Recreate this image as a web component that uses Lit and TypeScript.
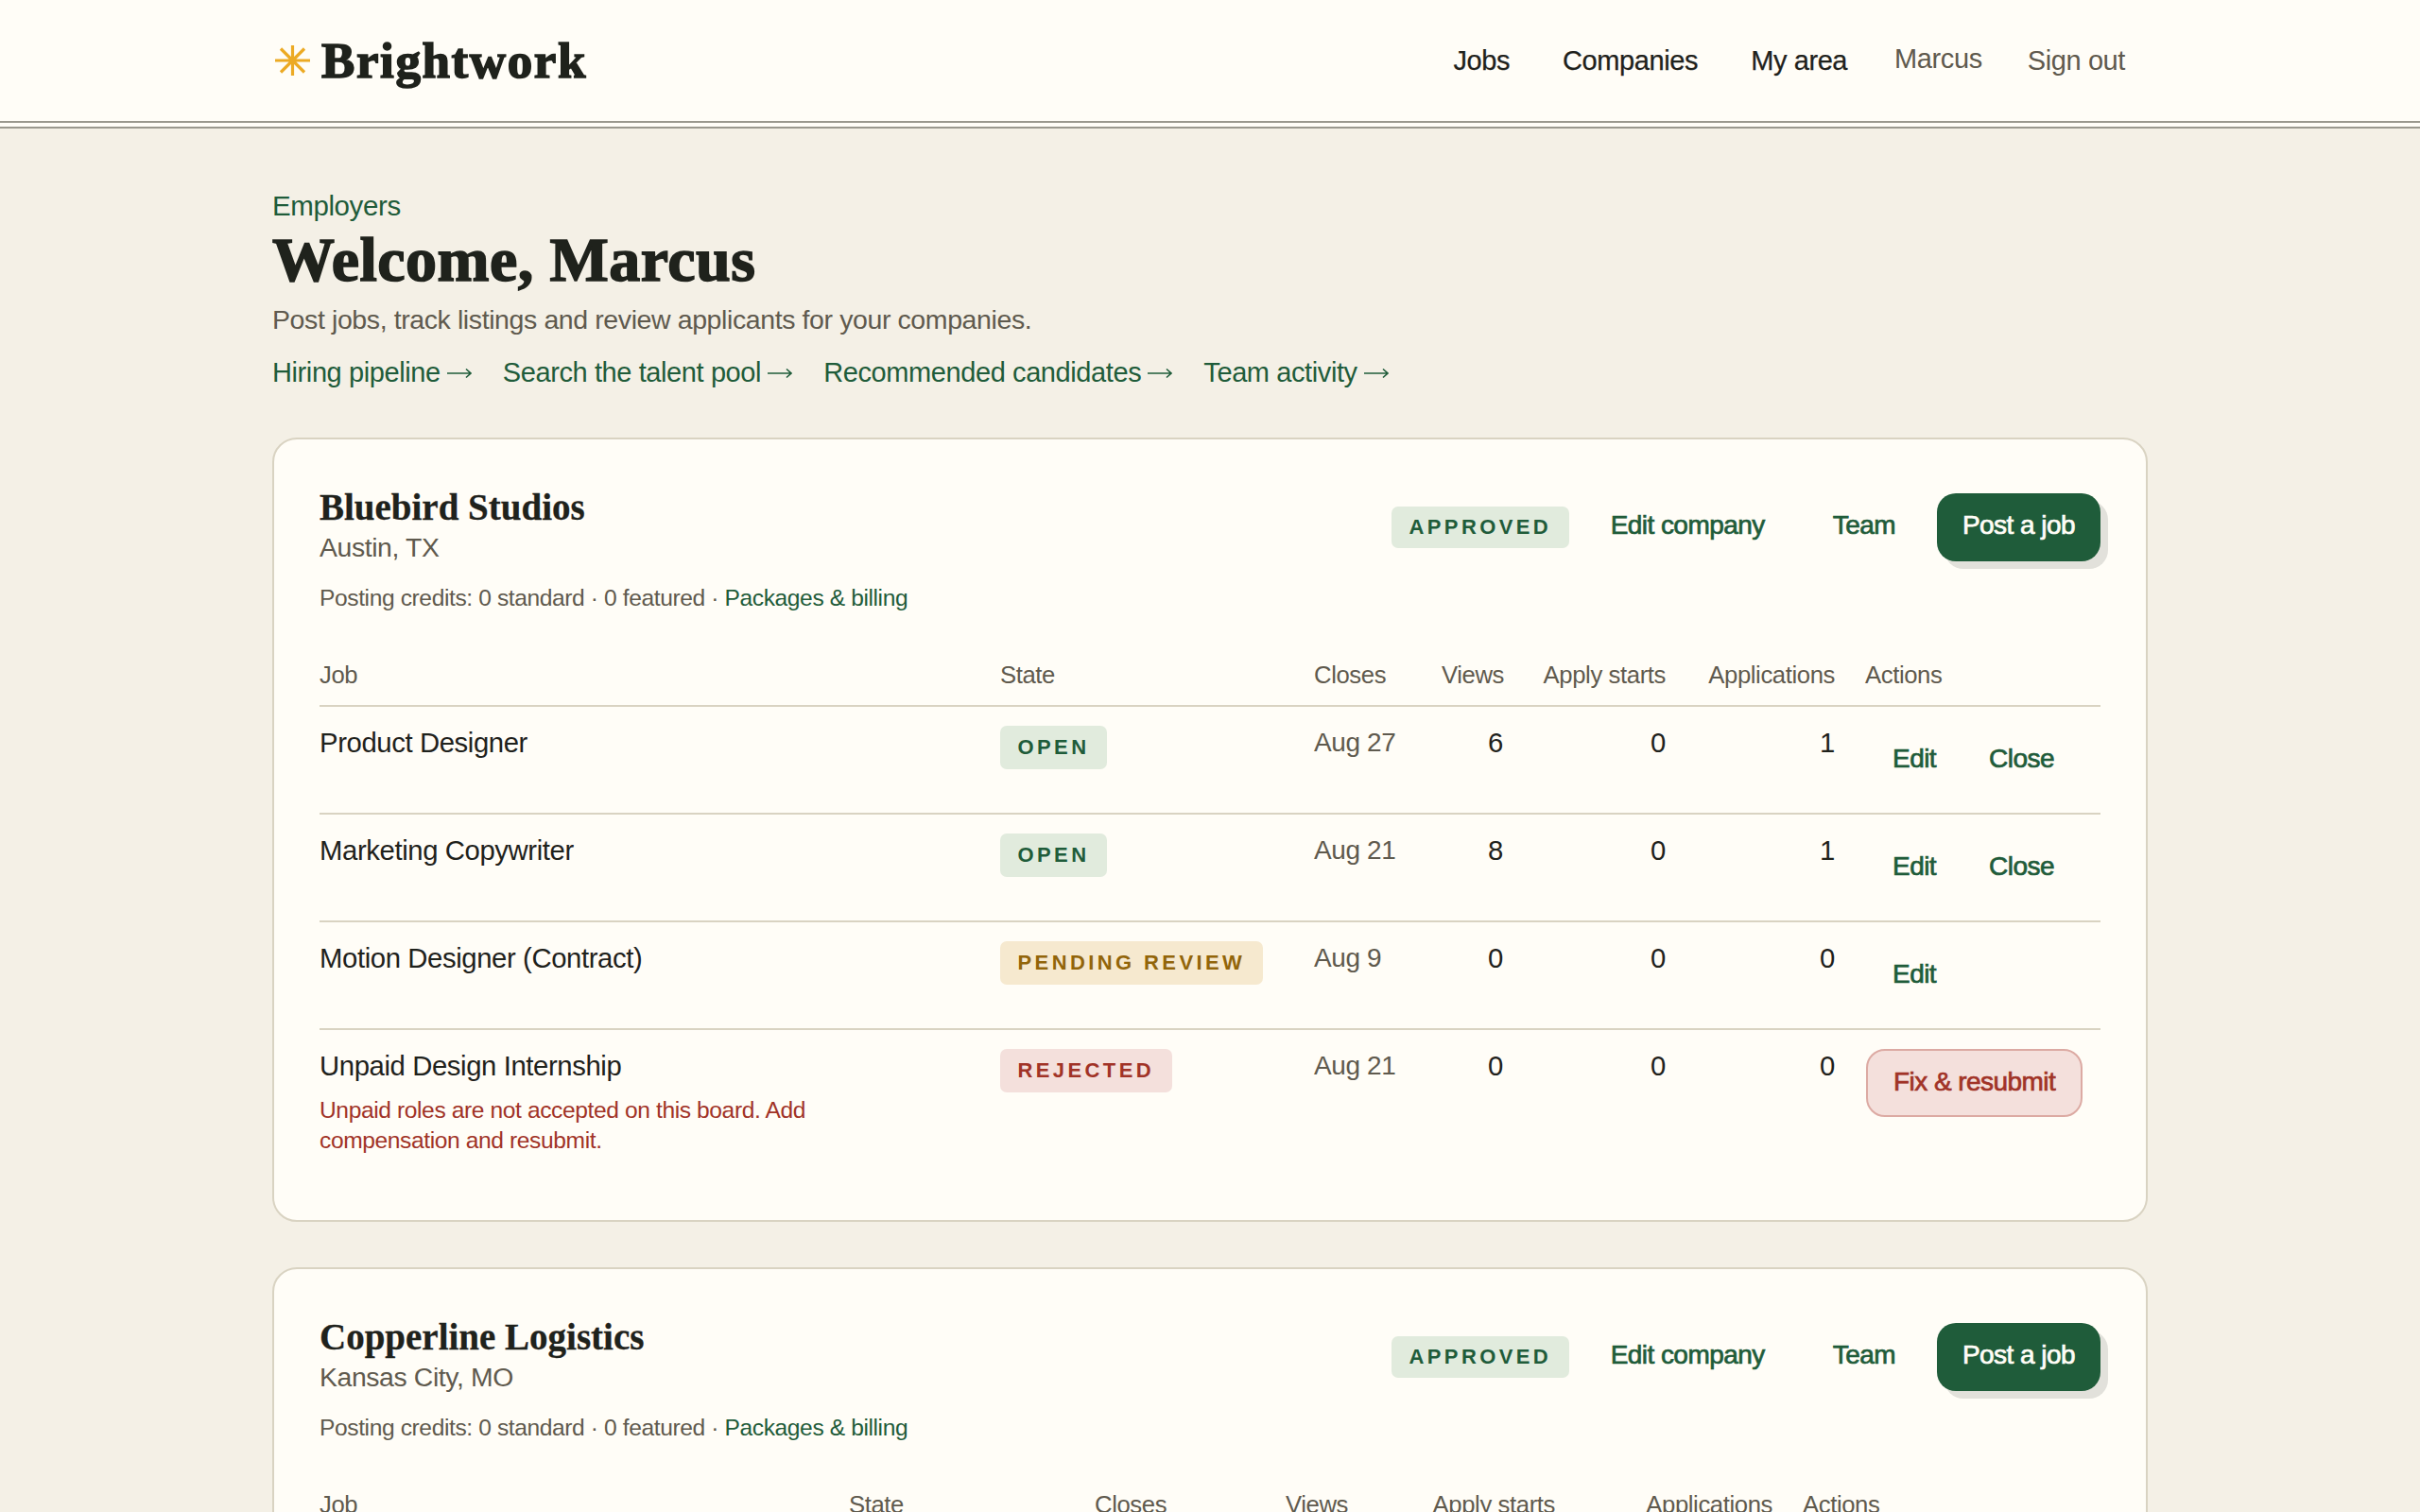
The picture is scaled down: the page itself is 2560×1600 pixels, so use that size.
import { LitElement, html, css, svg, TemplateResult } from 'lit';
import { customElement } from 'lit/decorators.js';

type Tone = 'open' | 'pending' | 'rejected';

interface Job {
	title: string;
	note?: string;
	state: string;
	tone: Tone;
	closes: string;
	views: number;
	starts: number;
	applications: number;
	actions: string[];
	fix?: boolean;
}

interface Company {
	name: string;
	location: string;
	cols: number[];
	jobs: Job[];
}

const COMPANIES: Company[] = [
	{
		name: 'Bluebird Studios',
		location: 'Austin, TX',
		cols: [704, 332, 135, 97, 172, 179, 265],
		jobs: [
			{ title: 'Product Designer', state: 'Open', tone: 'open', closes: 'Aug 27', views: 6, starts: 0, applications: 1, actions: ['Edit', 'Close'] },
			{ title: 'Marketing Copywriter', state: 'Open', tone: 'open', closes: 'Aug 21', views: 8, starts: 0, applications: 1, actions: ['Edit', 'Close'] },
			{ title: 'Motion Designer (Contract)', state: 'Pending review', tone: 'pending', closes: 'Aug 9', views: 0, starts: 0, applications: 0, actions: ['Edit'] },
			{
				title: 'Unpaid Design Internship',
				note: 'Unpaid roles are not accepted on this board. Add compensation and resubmit.',
				state: 'Rejected',
				tone: 'rejected',
				closes: 'Aug 21',
				views: 0,
				starts: 0,
				applications: 0,
				actions: [],
				fix: true,
			},
		],
	},
	{
		name: 'Copperline Logistics',
		location: 'Kansas City, MO',
		cols: [544, 260, 202, 96, 221, 230, 331],
		jobs: [],
	},
];

const QUICK_LINKS = ['Hiring pipeline', 'Search the talent pool', 'Recommended candidates', 'Team activity'];

const arrow = svg`<path d="M0 6h25M20 1.5 25 6l-5 4.5" />`;

@customElement('app-root')
export class AppRoot extends LitElement {
	protected render(): TemplateResult {
		return html`
			<header class="site-header">
				<div class="wrap header-row">
					<a class="logo">
						<svg class="logo-mark" viewBox="0 0 37 32" aria-hidden="true">
							<path d="M18.5 0v32M0 16h37M6 3.5l25 25M31 3.5l-25 25" />
						</svg>
						<span>Brightwork</span>
					</a>
					<nav class="nav">
						<a>Jobs</a>
						<a>Companies</a>
						<a>My area</a>
						<span class="nav-user">Marcus</span>
						<a class="muted">Sign out</a>
					</nav>
				</div>
			</header>
			<main class="wrap main">
				<p class="eyebrow">Employers</p>
				<h1>Welcome, Marcus</h1>
				<p class="lede">Post jobs, track listings and review applicants for your companies.</p>
				<div class="quick-links">
					${QUICK_LINKS.map(
						(label) => html`<a>${label}<svg class="arrow" viewBox="0 0 26 12" aria-hidden="true">${arrow}</svg></a>`,
					)}
				</div>
				${COMPANIES.map((c) => this.renderCompany(c))}
			</main>
		`;
	}

	private renderCompany(company: Company) {
		return html`
			<section class="card">
				<div class="card-head">
					<div>
						<h2>${company.name}</h2>
						<p class="location">${company.location}</p>
						<p class="credits">Posting credits: 0 standard · 0 featured · <a>Packages &amp; billing</a></p>
					</div>
					<div class="card-actions">
						<span class="badge open approved">Approved</span>
						<a class="btn">Edit company</a>
						<a class="btn">Team</a>
						<a class="btn primary">Post a job</a>
					</div>
				</div>
				<table>
					<colgroup>
						${company.cols.map((w) => html`<col style="width:${w}px" />`)}
					</colgroup>
					<thead>
						<tr>
							<th>Job</th>
							<th>State</th>
							<th>Closes</th>
							<th class="num">Views</th>
							<th class="num">Apply starts</th>
							<th class="num">Applications</th>
							<th>Actions</th>
						</tr>
					</thead>
					<tbody>
						${company.jobs.map((j) => this.renderJob(j))}
					</tbody>
				</table>
			</section>
		`;
	}

	private renderJob(job: Job) {
		return html`
			<tr>
				<td>
					<div class="job-title">${job.title}</div>
					${job.note ? html`<div class="job-note">${job.note}</div>` : ''}
				</td>
				<td><span class="badge ${job.tone}">${job.state}</span></td>
				<td class="date">${job.closes}</td>
				<td class="num">${job.views}</td>
				<td class="num">${job.starts}</td>
				<td class="num">${job.applications}</td>
				<td class="row-actions">
					${job.actions.map((a) => html`<a class="btn">${a}</a>`)}
					${job.fix ? html`<a class="btn danger">Fix &amp; resubmit</a>` : ''}
				</td>
			</tr>
		`;
	}

	static styles = css`
		:host {
			display: block;
			height: 1600px;
			overflow: hidden;
			background: #f4f0e6;
			color: #1f221c;
			font-family: 'Liberation Sans', Arial, sans-serif;
			font-size: 29px;
			letter-spacing: -0.4px;
		}

		* {
			box-sizing: border-box;
		}

		h1,
		h2,
		p {
			margin: 0;
		}

		.wrap {
			width: 1984px;
			margin: 0 auto;
		}

		.site-header {
			height: 130px;
			background: #fffdf7;
			border-bottom: 2px solid #9a988e;
			box-shadow:
				0 4px 0 #fffdf7,
				0 6px 0 #9a988e;
		}

		.header-row {
			height: 128px;
			display: flex;
			align-items: center;
			justify-content: space-between;
		}

		.logo {
			display: flex;
			align-items: center;
			gap: 12px;
			padding-left: 3px;
			font-family: 'Liberation Serif', serif;
			font-weight: 700;
			font-size: 53px;
			letter-spacing: 1.6px;
			-webkit-text-stroke: 1.6px #1f221c;
		}

		.logo-mark {
			width: 37px;
			height: 32px;
			fill: none;
			stroke: #ecaa24;
			stroke-width: 3.2;
		}

		.nav {
			display: flex;
			align-items: center;
			padding-right: 24px;
			font-size: 29px;
			-webkit-text-stroke: 0.25px currentColor;
		}

		.nav a {
			padding: 0 28px;
		}

		.nav a:last-child {
			padding: 0 0 0 48px;
		}

		.nav .muted,
		.nav-user {
			color: #5f5a4e;
			-webkit-text-stroke: 0;
		}

		.nav-user {
			margin-left: 22px;
			margin-top: -4px;
		}

		.main {
			padding-top: 70px;
		}

		.eyebrow {
			color: #1f5c3a;
			font-size: 29.5px;
			line-height: 36px;
		}

		h1 {
			margin-top: 3px;
			font-family: 'Liberation Serif', serif;
			font-weight: 700;
			font-size: 66px;
			line-height: 72px;
			letter-spacing: 0.45px;
			-webkit-text-stroke: 1.6px #1f221c;
		}

		.lede {
			margin-top: 7px;
			color: #5f5a4e;
			font-size: 28.5px;
			line-height: 40px;
		}

		.quick-links {
			display: flex;
			gap: 33px;
			margin-top: 16px;
			color: #1f5c3a;
			font-size: 29px;
			line-height: 40px;
		}

		.quick-links a {
			display: inline-flex;
			align-items: center;
			gap: 7px;
		}

		.arrow {
			width: 26px;
			height: 12px;
			margin-top: 2px;
			fill: none;
			stroke: currentColor;
			stroke-width: 1.6;
		}

		.card {
			margin-top: 48px;
			padding: 48px;
			background: #fffdf7;
			border: 2px solid #d9d3c2;
			border-radius: 26px;
		}

		.quick-links + .card {
			margin-top: 49px;
		}

		.card-head {
			display: flex;
			justify-content: space-between;
			align-items: flex-start;
		}

		h2 {
			padding-top: 2px;
			font-family: 'Liberation Serif', serif;
			font-weight: 700;
			font-size: 39px;
			line-height: 44px;
			letter-spacing: 0;
			-webkit-text-stroke: 0.3px #1f221c;
		}

		.location {
			color: #5f5a4e;
			font-size: 28.4px;
			line-height: 40px;
		}

		.credits {
			margin-top: 16px;
			color: #5f5a4e;
			font-size: 24.6px;
			line-height: 36px;
		}

		.credits a {
			color: #1f5c3a;
		}

		.card-actions {
			display: flex;
			align-items: center;
			gap: 16px;
			margin-top: 9px;
		}

		.badge {
			display: inline-block;
			padding: 0 18.5px;
			height: 46px;
			line-height: 46px;
			border-radius: 7px;
			font-size: 22px;
			font-weight: 700;
			letter-spacing: 3.4px;
			text-transform: uppercase;
			white-space: nowrap;
		}

		.badge.open {
			background: #e1ebdd;
			color: #1f5c3a;
		}

		.badge.pending {
			background: #f6e9cf;
			color: #92650a;
		}

		.badge.rejected {
			background: #f4e0dc;
			color: #a13327;
		}

		.badge.approved {
			height: 44px;
			line-height: 44px;
		}

		.btn {
			display: inline-block;
			height: 72px;
			padding: 0 26px;
			border: 2px solid transparent;
			border-radius: 20px;
			line-height: 64px;
			font-size: 28px;
			letter-spacing: -0.55px;
			-webkit-text-stroke: 0.7px currentColor;
			color: #1f5c3a;
			white-space: nowrap;
		}

		.btn.primary {
			padding: 0 25px;
			background: #1f5c3a;
			color: #fffdf7;
			box-shadow: 8px 8px 0 #e2e1db;
		}

		.btn.danger {
			padding: 0 27px;
			background: #f4e0dc;
			border-color: #dcaaa3;
			color: #a13327;
		}

		table {
			width: 1884px;
			margin-top: 36px;
			border-collapse: collapse;
			table-layout: fixed;
		}

		th {
			height: 60px;
			padding: 0 16px 4px;
			border-bottom: 2px solid #d9d3c2;
			color: #5f5a4e;
			font-size: 25.7px;
			font-weight: 400;
			text-align: left;
			white-space: nowrap;
		}

		th:first-child,
		td:first-child {
			padding-left: 0;
		}

		td {
			padding: 20px 16px;
			vertical-align: top;
			font-size: 29.3px;
			line-height: 36px;
			border-bottom: 2px solid #d9d3c2;
		}

		tr:last-child td {
			border-bottom: none;
		}

		.num {
			text-align: right;
		}

		.date {
			color: #5f5a4e;
			font-size: 28px;
		}

		.job-note {
			width: 560px;
			margin-top: 13px;
			color: #a13327;
			font-size: 24.6px;
			line-height: 32px;
		}

		.row-actions {
			padding: 20px 0 20px 17px;
			white-space: nowrap;
		}

		.row-actions .btn {
			line-height: 66px;
		}
	`;
}
